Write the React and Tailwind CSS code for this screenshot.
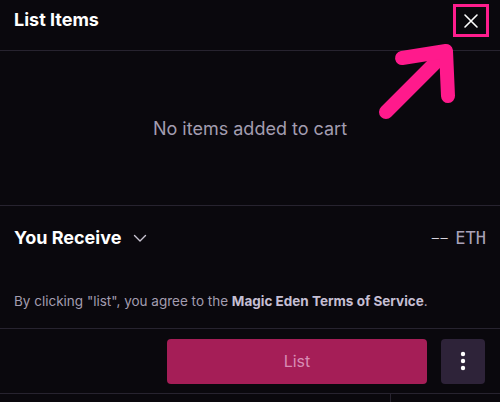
import React from "react";

export default function App() {
  return (
    <div
      className="relative w-[500px] h-[402px] overflow-hidden bg-[#0a080d] flex flex-col"
      style={{ fontFamily: "Inter, 'Noto Sans', sans-serif" }}
    >
      {/* Header */}
      <div className="h-[51px] shrink-0 border-b border-[#27232f] flex items-start justify-between pl-[14px] pr-[11px]">
        <h2 className="mt-[8px] text-[18px] leading-[24px] font-bold text-white">List Items</h2>
        <button className="mt-[4px] w-[36px] h-[33px] border-[3px] border-[#ff1d8d] flex items-center justify-center">
          <svg width="16" height="16" viewBox="0 0 16 16" fill="none" stroke="white" strokeWidth="1.6" strokeLinecap="round">
            <path d="M2 2 L14 14 M14 2 L2 14" />
          </svg>
        </button>
      </div>

      {/* Empty state */}
      <div className="h-[155px] shrink-0 border-b border-[#27232f] flex items-center justify-center">
        <p className="text-[18px] text-[#a39db0]">No items added to cart</p>
      </div>

      {/* You receive */}
      <div className="h-[123px] shrink-0 border-b border-[#27232f] px-[14px] flex flex-col">
        <div className="mt-[20px] flex items-center justify-between">
          <div className="flex items-center gap-[12px]">
            <span className="text-[18px] leading-[24px] font-bold text-white">You Receive</span>
            <svg width="14" height="9" viewBox="0 0 14 9" fill="none" stroke="#c9c4d2" strokeWidth="1.4" strokeLinecap="round" strokeLinejoin="round">
              <path d="M1.5 1.5 L7 7 L12.5 1.5" />
            </svg>
          </div>
          <span
            className="flex items-center text-[17px] leading-[24px] text-[#a9a2b8]"
            style={{ fontFamily: "'DejaVu Sans Mono', 'Liberation Mono', monospace" }}
          >
            <span className="text-[12px] tracking-[1.5px] text-[#e6e2ec] mr-[6px]">––</span>
            <span>ETH</span>
          </span>
        </div>
        <p className="mt-[42px] text-[13.5px] leading-[18px] text-[#a39db0]">
          By clicking "list", you agree to the{" "}
          <span className="font-bold text-[#c6bfd3]">Magic Eden Terms of Service</span>.
        </p>
      </div>

      {/* Footer */}
      <div className="h-[65px] shrink-0 border-b border-[#27232f] flex items-center justify-end gap-[14px] pr-[15px]">
        <button className="w-[260px] h-[45px] rounded-[4px] bg-[#a51e57] text-[16px] text-[#d88db4]">List</button>
        <button className="w-[44px] h-[45px] rounded-[4px] bg-[#2e2339] flex items-center justify-center">
          <svg width="6" height="20" viewBox="0 0 6 20" fill="white">
            <circle cx="3" cy="3" r="2.2" />
            <circle cx="3" cy="10" r="2.2" />
            <circle cx="3" cy="17" r="2.2" />
          </svg>
        </button>
      </div>

      <div className="flex-1 flex">
        <div className="w-[391px] border-r border-[#27232f]" />
      </div>

      {/* Annotation arrow */}
      <svg className="absolute left-0 top-0 pointer-events-none" width="500" height="402" viewBox="0 0 500 402" fill="none">
        <g stroke="#ff1a8c" strokeWidth="14" strokeLinecap="round" strokeLinejoin="round">
          <path d="M386 112 L444 54" />
          <path d="M402 58 L446 51 L448 96" />
        </g>
      </svg>
    </div>
  );
}
